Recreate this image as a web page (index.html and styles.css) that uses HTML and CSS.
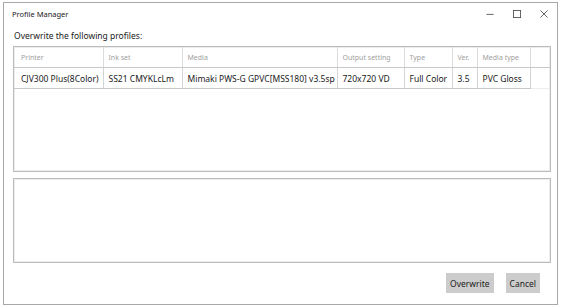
FILE: index.html
```html
<!DOCTYPE html>
<html lang="en">
<head>
  <meta charset="UTF-8">
  <title>Profile Manager</title>
  <link rel="stylesheet" href="styles.css">
</head>
<body>
<div class="window">
  <div class="titlebar">
    <span class="title">Profile Manager</span>
    <div class="controls">
      <span class="ctl">
        <svg width="10" height="10" viewBox="0 0 10 10"><path d="M0.5 5.5h9" stroke="#444" stroke-width="1"/></svg>
      </span>
      <span class="ctl">
        <svg width="10" height="10" viewBox="0 0 10 10"><rect x="0.5" y="0.5" width="9" height="9" fill="none" stroke="#444" stroke-width="1"/></svg>
      </span>
      <span class="ctl">
        <svg width="10" height="10" viewBox="0 0 10 10"><path d="M0.5 0.5l9 9M9.5 0.5l-9 9" stroke="#444" stroke-width="1"/></svg>
      </span>
    </div>
  </div>

  <div class="content">
    <div class="heading">Overwrite the following profiles:</div>

    <div class="panel list">
      <table class="profiles">
        <colgroup>
          <col class="c-printer">
          <col class="c-inkset">
          <col class="c-media">
          <col class="c-output">
          <col class="c-type">
          <col class="c-ver">
          <col class="c-mtype">
          <col>
        </colgroup>
        <thead>
          <tr>
            <th class="first">Printer</th>
            <th>Ink set</th>
            <th>Media</th>
            <th>Output setting</th>
            <th>Type</th>
            <th>Ver.</th>
            <th>Media type</th>
            <th class="filler"></th>
          </tr>
        </thead>
        <tbody>
          <tr>
            <td class="first">CJV300 Plus(8Color)</td>
            <td>SS21 CMYKLcLm</td>
            <td>Mimaki PWS-G GPVC[MSS180] v3.5sp</td>
            <td>720x720 VD</td>
            <td>Full Color</td>
            <td>3.5</td>
            <td>PVC Gloss</td>
            <td class="filler"></td>
          </tr>
        </tbody>
      </table>
    </div>

    <div class="panel notes"></div>

    <div class="actions">
      <button class="btn">Overwrite</button>
      <button class="btn">Cancel</button>
    </div>
  </div>
</div>
</body>
</html>
```

FILE: styles.css
```css
html, body {
  margin: 0;
  background: #ffffff;
}
body {
  font-family: "Noto Sans", "Open Sans", sans-serif;
  color: #1a1a1a;
}
.window {
  box-sizing: border-box;
  margin: 2px 5px 0 3px;
  height: 303px;
  border: 1px solid #a8a8a8;
  display: flex;
  flex-direction: column;
}
.titlebar {
  height: 21px;
  display: flex;
  align-items: center;
  padding-left: 8px;
}
.title {
  font-size: 7.5px;
  flex: 1;
}
.controls {
  display: flex;
  align-self: stretch;
}
.ctl {
  width: 27px;
  display: flex;
  align-items: center;
  justify-content: center;
}
.ctl svg {
  width: 8px;
  height: 8px;
}
.content {
  flex: 1;
  display: flex;
  flex-direction: column;
  padding: 0 6px 0 9px;
}
.heading {
  font-size: 8.5px;
  height: 22px;
  display: flex;
  align-items: center;
  padding-left: 1px;
}
.panel {
  border: 1px solid #bcbcbc;
  box-shadow: inset 1px 1px 0 #ececec, inset -1px -1px 0 #ececec;
  background: #fff;
}
.list {
  height: 126px;
  box-sizing: border-box;
  padding: 0;
}
.notes {
  margin-top: 6px;
  height: 85px;
  box-sizing: border-box;
}
.profiles {
  border-collapse: collapse;
  table-layout: fixed;
  width: 100%;
  font-size: 8.5px;
}
.c-printer { width: 89px; }
.c-inkset { width: 79px; }
.c-media { width: 155px; }
.c-output { width: 67px; }
.c-type { width: 48px; }
.c-ver { width: 25px; }
.c-mtype { width: 53px; }
.profiles th {
  font-weight: normal;
  color: #a0a0a0;
  font-size: 7px;
  text-align: left;
  height: 20px;
  padding: 0 0 0 5px;
  border-right: 1px solid #dcdcdc;
  border-bottom: 1px solid #c8c8c8;
  white-space: nowrap;
}
.profiles td {
  text-align: left;
  height: 20px;
  padding: 0 0 0 5px;
  border-right: 1px solid #d4d4d4;
  border-bottom: 1px solid #c8c8c8;
  white-space: nowrap;
  overflow: hidden;
}
.profiles .first {
  padding-left: 7px;
}
.profiles th.filler {
  border-right: none;
}
.profiles td.filler {
  border-right: none;
  border-bottom-color: #ececec;
}
.actions {
  display: flex;
  justify-content: flex-end;
  gap: 12px;
  margin-top: 10px;
  padding-right: 11px;
}
.btn {
  font-family: inherit;
  font-size: 8.5px;
  color: #1a1a1a;
  background: #cccccc;
  border: 1px solid #cccccc;
  height: 20px;
  padding: 0 3px;
}
```
